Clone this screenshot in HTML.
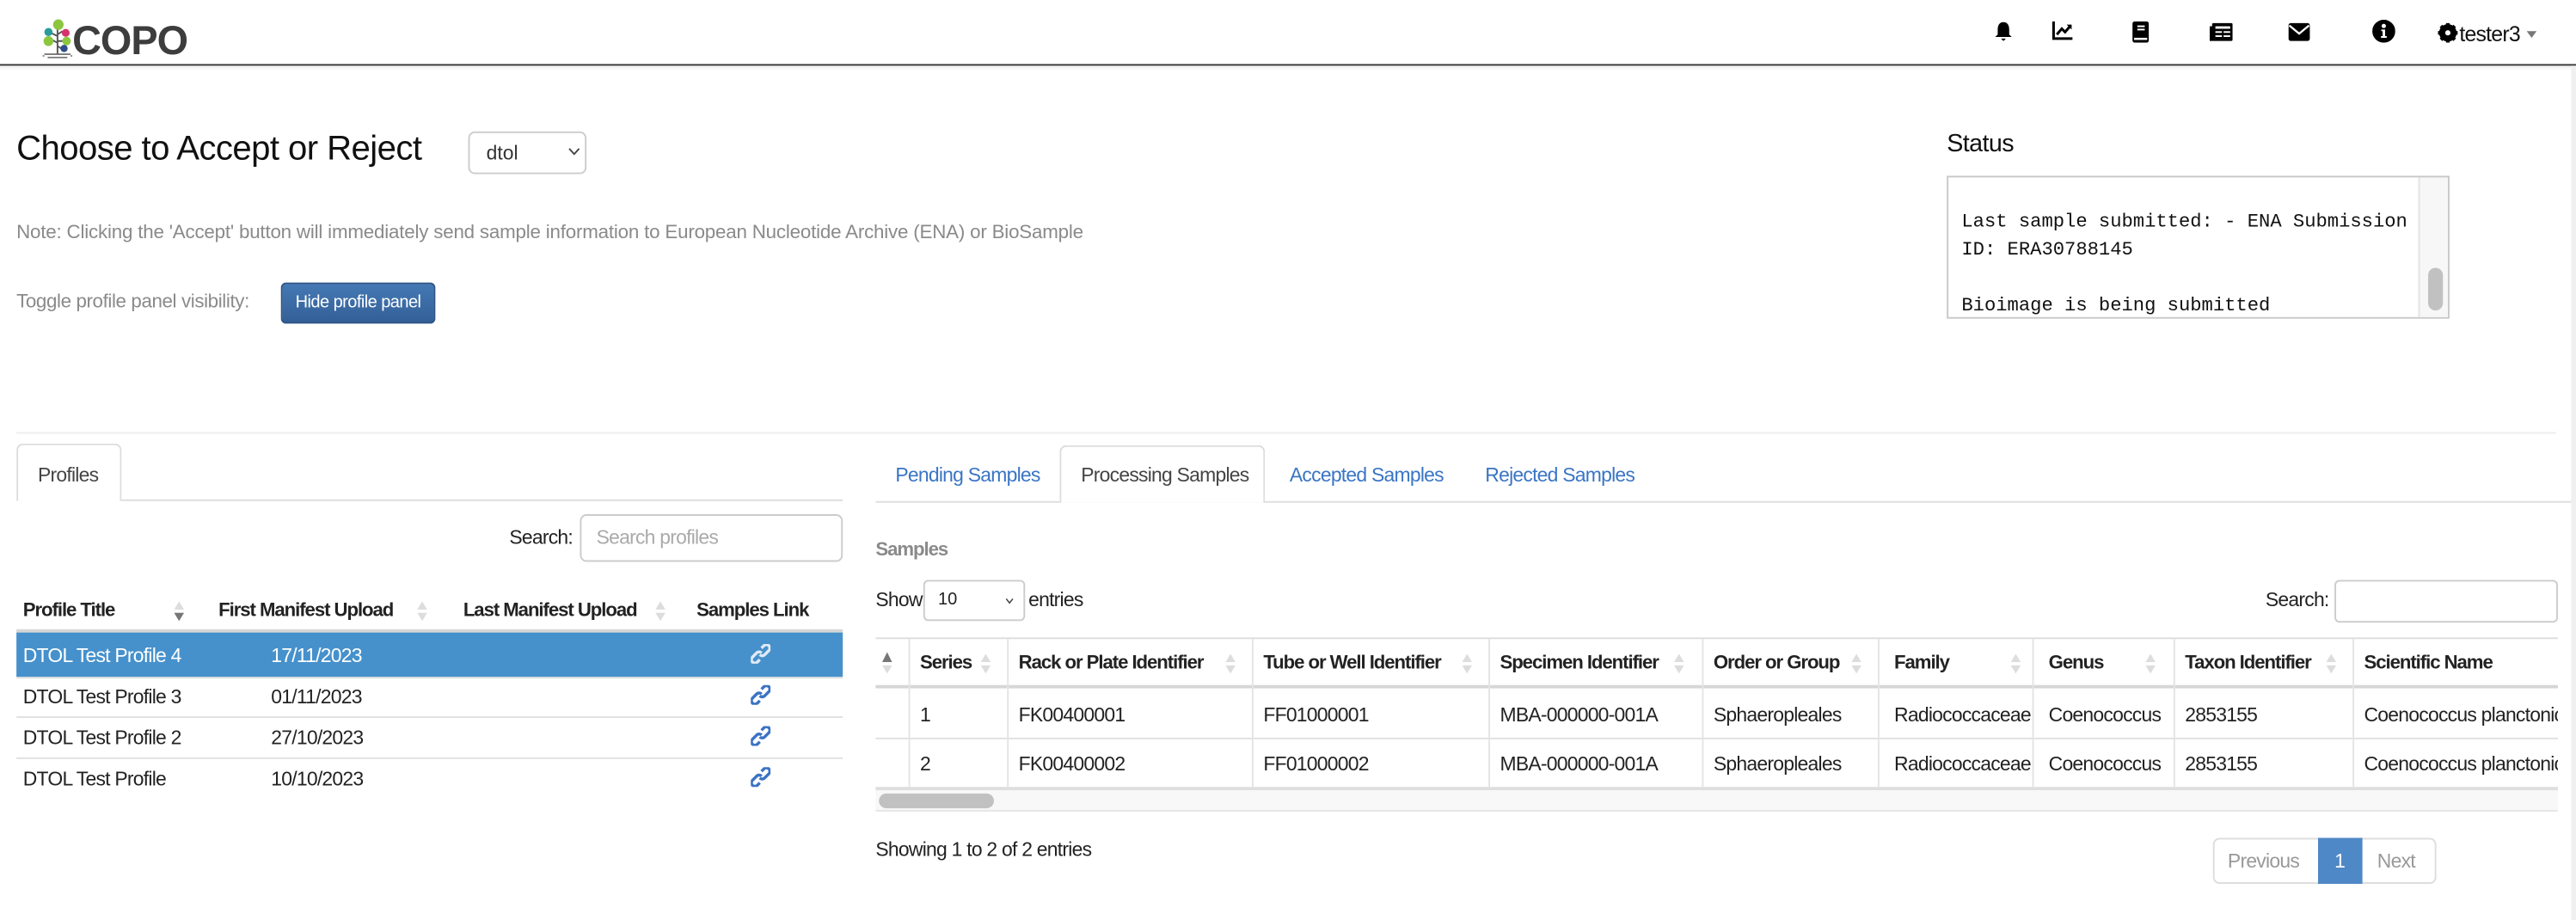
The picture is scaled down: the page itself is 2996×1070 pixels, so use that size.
<!DOCTYPE html>
<html><head><meta charset="utf-8">
<style>
html,body{margin:0;padding:0;width:2996px;height:1070px;overflow:hidden;background:#fff}
#w{position:absolute;left:0;top:0;width:1568px;height:560px;transform:scale(1.91071);transform-origin:0 0;font-family:"Liberation Sans",sans-serif;color:#222;font-size:12px}
.a{position:absolute;white-space:nowrap}
.ic{position:absolute;top:13px}
.lt{font-size:12px;letter-spacing:-0.4px}
.b{font-weight:bold;font-size:11.6px;letter-spacing:-0.55px}
.sort{position:absolute;width:6px;height:12px}
.sort:before{content:"";position:absolute;left:0;top:0;border-left:3px solid transparent;border-right:3px solid transparent;border-bottom:5px solid #ddd}
.sort:after{content:"";position:absolute;left:0;top:7px;border-left:3px solid transparent;border-right:3px solid transparent;border-top:5px solid #ddd}
.vl{position:absolute;width:1px;background:#e4e4e4}
.hl{position:absolute;height:1px;background:#e0e0e0}
</style></head><body><div id="w">
<svg class="a" style="left:25px;top:11px" width="20" height="26" viewBox="0 0 20 26">
<path d="M10 6V22M10 11L6 9M10 10L13 8M10 15L6 13M10 14L13 14M10 17L13 19" stroke="#555" stroke-width="1" fill="none"/>
<path d="M2 22H18M4 24H16M1 23h1M18 23h1" stroke="#666" stroke-width="0.8"/>
<circle cx="10.5" cy="4" r="3.2" fill="#8cc63f"/><circle cx="4.5" cy="8.5" r="2.5" fill="#2a9d9a"/><circle cx="15" cy="9" r="2.4" fill="#d6336c"/><circle cx="4.5" cy="14" r="3" fill="#8cc63f"/><circle cx="15.5" cy="14" r="2.6" fill="#8cc63f"/><circle cx="14" cy="18.5" r="2.2" fill="#2f4d8a"/>
</svg>
<div class="a" style="left:44px;top:12px;font-size:24.5px;font-weight:bold;color:#3d3d3d;letter-spacing:-0.5px">COPO</div>
<div class="a" style="left:0;top:39px;width:1568px;height:1px;background:#333"></div>
<div class="a" style="left:0;top:40px;width:1568px;height:3px;background:linear-gradient(#eee,#fff)"></div>
<svg class="ic" style="left:1214px" width="11" height="12" viewBox="0 0 11 12"><path d="M5.5 0.5C3 0.5 2 2.5 2 5V8L0.5 9.5H10.5L9 8V5C9 2.5 8 0.5 5.5 0.5Z" fill="#000"/><path d="M4 10.5H7L5.5 12Z" fill="#000"/></svg>
<svg class="ic" style="left:1249px" width="13" height="12" viewBox="0 0 13 12"><path d="M1 0V10.5H12.5" stroke="#000" stroke-width="1.6" fill="none"/><path d="M3 8L6 4.5L8 6.5L11 3" stroke="#000" stroke-width="1.6" fill="none"/><path d="M9 2H12V5Z" fill="#000"/></svg>
<svg class="ic" style="left:1298px" width="10" height="13" viewBox="0 0 10 13"><rect x="0" y="0" width="10" height="13" rx="1.5" fill="#000"/><rect x="3" y="2.5" width="4.5" height="1" fill="#fff"/><rect x="3" y="4.5" width="4.5" height="1" fill="#fff"/><rect x="1" y="10" width="8" height="1.3" fill="#fff"/></svg>
<svg class="ic" style="left:1345px;top:14px" width="14" height="11" viewBox="0 0 14 11"><rect x="1.5" y="0" width="12.5" height="11" rx="1" fill="#000"/><rect x="0" y="2" width="2" height="9" fill="#000"/><rect x="3.5" y="2" width="9" height="1.5" fill="#fff"/><rect x="3.5" y="5" width="4" height="1" fill="#fff"/><rect x="8.5" y="5" width="4" height="1" fill="#fff"/><rect x="3.5" y="7.5" width="4" height="1" fill="#fff"/><rect x="8.5" y="7.5" width="4" height="1" fill="#fff"/></svg>
<svg class="ic" style="left:1393px;top:14px" width="13" height="11" viewBox="0 0 13 11"><rect width="13" height="11" rx="1.5" fill="#000"/><path d="M0.5 1.5L6.5 6.5L12.5 1.5" stroke="#fff" stroke-width="1.2" fill="none"/></svg>
<svg class="ic" style="left:1444px;top:12px" width="14" height="14" viewBox="0 0 14 14"><circle cx="7" cy="7" r="7" fill="#000"/><circle cx="7" cy="3.8" r="1.3" fill="#fff"/><path d="M5.5 6H7.8V10H8.8V11H5.3V10H6.3V7H5.5Z" fill="#fff"/></svg>
<svg class="ic" style="left:1484px;top:14px" width="12" height="12" viewBox="0 0 12 12"><circle cx="6" cy="6" r="4" fill="none" stroke="#000" stroke-width="2.6"/><g stroke="#000" stroke-width="2.2"><path d="M6 0V12M0 6H12M1.8 1.8L10.2 10.2M10.2 1.8L1.8 10.2"/></g><circle cx="6" cy="6" r="1.6" fill="#fff"/></svg>
<div class="a" style="left:1497px;top:13px;font-size:13px;color:#111;letter-spacing:-0.4px">tester3</div>
<div class="a" style="left:1538px;top:19px;border-left:3.5px solid transparent;border-right:3.5px solid transparent;border-top:4px solid #777"></div>

<div class="a" style="left:10px;top:79px;font-size:21px;color:#111;letter-spacing:-0.3px">Choose to Accept or Reject</div>
<div class="a" style="left:285px;top:80px;width:72px;height:26px;border:1px solid #ccc;border-radius:4px;box-sizing:border-box"></div>
<div class="a" style="left:296px;top:86px;font-size:12px;color:#333">dtol</div>
<svg class="a" style="left:346px;top:90px" width="7" height="5" viewBox="0 0 7 5"><path d="M0.5 0.5L3.5 3.8L6.5 0.5" stroke="#444" stroke-width="1" fill="none"/></svg>
<div class="a" style="left:10px;top:135px;font-size:11.7px;color:#8a8a8a;letter-spacing:-0.1px">Note: Clicking the 'Accept' button will immediately send sample information to European Nucleotide Archive (ENA) or BioSample</div>
<div class="a" style="left:10px;top:177px;font-size:11.7px;color:#8a8a8a;letter-spacing:-0.2px">Toggle profile panel visibility:</div>
<div class="a" style="left:171px;top:172px;width:94px;height:25px;background:linear-gradient(#4479b4,#345f97);border:1px solid #2e5587;border-radius:3px;box-sizing:border-box;color:#fff;font-size:10.5px;letter-spacing:-0.3px;text-align:center;line-height:23px">Hide profile panel</div>

<div class="a" style="left:1185px;top:79px;font-size:15px;color:#111;letter-spacing:-0.3px">Status</div>
<div class="a" style="left:1185px;top:107px;width:306px;height:87px;border:1px solid #c8c8c8;box-sizing:border-box;overflow:hidden">
 <div class="a" style="left:0;top:19px;font-family:'Liberation Mono',monospace;font-size:11.6px;line-height:17px;color:#111;padding-left:8px">Last sample submitted: - ENA Submission<br>ID: ERA30788145<br><br>Bioimage is being submitted</div>
 <div class="a" style="left:286px;top:0;width:19px;height:86px;background:#f7f7f7;border-left:1px solid #e4e4e4"></div>
 <div class="a" style="left:292px;top:55px;width:9px;height:26px;background:#c1c1c1;border-radius:5px"></div>
</div>
<div class="a" style="left:10px;top:263px;width:1546px;height:1px;background:#eee"></div>

<div class="a" style="left:10px;top:270px;width:64px;height:35px;border:1px solid #ddd;border-bottom:none;border-radius:4px 4px 0 0;box-sizing:border-box;background:#fff"></div>
<div class="a lt" style="left:23px;top:282px;color:#444">Profiles</div>
<div class="hl" style="left:74px;top:304px;width:439px;background:#ddd"></div>
<div class="a lt" style="left:310px;top:320px">Search:</div>
<div class="a" style="left:353px;top:313px;width:160px;height:29px;border:1px solid #ccc;border-radius:4px;box-sizing:border-box"></div>
<div class="a lt" style="left:363px;top:320px;color:#aaa">Search profiles</div>
<div class="a b" style="left:14px;top:365px">Profile Title</div>
<div class="sort" style="left:106px;top:366px"></div><div class="a" style="left:106px;top:373px;border-left:3px solid transparent;border-right:3px solid transparent;border-top:5px solid #777"></div>
<div class="a b" style="left:133px;top:365px">First Manifest Upload</div><div class="sort" style="left:254px;top:366px"></div>
<div class="a b" style="left:282px;top:365px">Last Manifest Upload</div><div class="sort" style="left:399px;top:366px"></div>
<div class="a b" style="left:424px;top:365px">Samples Link</div>
<div class="a" style="left:10px;top:383px;width:503px;height:2px;background:#d6d6d6"></div>
<div class="a" style="left:10px;top:385px;width:503px;height:27px;background:#4691cc"></div>
<div class="hl" style="left:10px;top:412px;width:503px;background:#ddd"></div>
<div class="hl" style="left:10px;top:436px;width:503px"></div>
<div class="hl" style="left:10px;top:461px;width:503px"></div>
<div class="a lt" style="left:14px;top:392px;color:#fff">DTOL Test Profile 4</div><div class="a lt" style="left:165px;top:392px;color:#fff">17/11/2023</div>
<div class="a lt" style="left:14px;top:417px">DTOL Test Profile 3</div><div class="a lt" style="left:165px;top:417px">01/11/2023</div>
<div class="a lt" style="left:14px;top:442px">DTOL Test Profile 2</div><div class="a lt" style="left:165px;top:442px">27/10/2023</div>
<div class="a lt" style="left:14px;top:467px">DTOL Test Profile</div><div class="a lt" style="left:165px;top:467px">10/10/2023</div>
<svg class="a" style="left:457px;top:392px" width="12" height="12" viewBox="0 0 12 12"><g fill="none" stroke="#dfe9f5" stroke-width="1.8"><path d="M6.5 2.5L8 1a2 2 0 0 1 3 3L8.5 6.5a2 2 0 0 1-3 0"/><path d="M5.5 9.5L4 11a2 2 0 0 1-3-3L3.5 5.5a2 2 0 0 1 3 0"/></g></svg>
<svg class="a" style="left:457px;top:417px" width="12" height="12" viewBox="0 0 12 12"><g fill="none" stroke="#3b73c4" stroke-width="1.8"><path d="M6.5 2.5L8 1a2 2 0 0 1 3 3L8.5 6.5a2 2 0 0 1-3 0"/><path d="M5.5 9.5L4 11a2 2 0 0 1-3-3L3.5 5.5a2 2 0 0 1 3 0"/></g></svg>
<svg class="a" style="left:457px;top:442px" width="12" height="12" viewBox="0 0 12 12"><g fill="none" stroke="#3b73c4" stroke-width="1.8"><path d="M6.5 2.5L8 1a2 2 0 0 1 3 3L8.5 6.5a2 2 0 0 1-3 0"/><path d="M5.5 9.5L4 11a2 2 0 0 1-3-3L3.5 5.5a2 2 0 0 1 3 0"/></g></svg>
<svg class="a" style="left:457px;top:467px" width="12" height="12" viewBox="0 0 12 12"><g fill="none" stroke="#3b73c4" stroke-width="1.8"><path d="M6.5 2.5L8 1a2 2 0 0 1 3 3L8.5 6.5a2 2 0 0 1-3 0"/><path d="M5.5 9.5L4 11a2 2 0 0 1-3-3L3.5 5.5a2 2 0 0 1 3 0"/></g></svg>

<div class="hl" style="left:533px;top:305px;width:1035px;background:#ddd"></div>
<div class="a" style="left:645px;top:271px;width:125px;height:35px;border:1px solid #ddd;border-bottom:none;border-radius:4px 4px 0 0;box-sizing:border-box;background:#fff"></div>
<div class="a lt" style="left:545px;top:282px;color:#3a75c4">Pending Samples</div>
<div class="a lt" style="left:658px;top:282px;color:#444">Processing Samples</div>
<div class="a lt" style="left:785px;top:282px;color:#3a75c4">Accepted Samples</div>
<div class="a lt" style="left:904px;top:282px;color:#3a75c4">Rejected Samples</div>
<div class="a b" style="left:533px;top:328px;color:#8a8a8a">Samples</div>
<div class="a lt" style="left:533px;top:358px">Show</div>
<div class="a" style="left:562px;top:353px;width:62px;height:25px;border:1px solid #ccc;border-radius:3px;box-sizing:border-box"></div>
<div class="a" style="left:571px;top:359px;font-size:10.5px">10</div>
<svg class="a" style="left:612px;top:364px" width="5" height="4" viewBox="0 0 5 4"><path d="M0.5 0.5L2.5 3L4.5 0.5" stroke="#444" stroke-width="0.8" fill="none"/></svg>
<div class="a lt" style="left:626px;top:358px">entries</div>
<div class="a lt" style="left:1379px;top:358px">Search:</div>
<div class="a" style="left:1421px;top:353px;width:136px;height:26px;border:1px solid #ccc;border-radius:3px;box-sizing:border-box"></div>

<div class="hl" style="left:533px;top:388px;width:1024px;background:#ddd"></div>
<div class="a" style="left:533px;top:417px;width:1024px;height:2px;background:#d6d6d6"></div>
<div class="hl" style="left:533px;top:449px;width:1024px"></div>
<div class="a" style="left:533px;top:479px;width:1024px;height:2px;background:#dedede"></div>
<div class="a" style="left:533px;top:481px;width:1024px;height:12px;background:#f8f8f8"></div>
<div class="a" style="left:535px;top:483px;width:70px;height:9px;background:#c1c1c1;border-radius:5px"></div>
<div class="hl" style="left:533px;top:493px;width:1024px;background:#e6e6e6"></div>
<div class="vl" style="left:553px;top:389px;height:90px"></div>
<div class="vl" style="left:613px;top:389px;height:90px"></div>
<div class="vl" style="left:762px;top:389px;height:90px"></div>
<div class="vl" style="left:906px;top:389px;height:90px"></div>
<div class="vl" style="left:1036px;top:389px;height:90px"></div>
<div class="vl" style="left:1143px;top:389px;height:90px"></div>
<div class="vl" style="left:1237px;top:389px;height:90px"></div>
<div class="vl" style="left:1323px;top:389px;height:90px"></div>
<div class="vl" style="left:1432px;top:389px;height:90px"></div>
<div class="a" style="left:537px;top:397px;border-left:3px solid transparent;border-right:3px solid transparent;border-bottom:6px solid #777"></div><div class="a" style="left:537px;top:405px;border-left:3px solid transparent;border-right:3px solid transparent;border-top:5px solid #ddd"></div>
<div class="a b" style="left:560px;top:397px">Series</div><div class="sort" style="left:597px;top:398px"></div>
<div class="a b" style="left:620px;top:397px">Rack or Plate Identifier</div><div class="sort" style="left:746px;top:398px"></div>
<div class="a b" style="left:769px;top:397px">Tube or Well Identifier</div><div class="sort" style="left:890px;top:398px"></div>
<div class="a b" style="left:913px;top:397px">Specimen Identifier</div><div class="sort" style="left:1019px;top:398px"></div>
<div class="a b" style="left:1043px;top:397px">Order or Group</div><div class="sort" style="left:1127px;top:398px"></div>
<div class="a b" style="left:1153px;top:397px">Family</div><div class="sort" style="left:1224px;top:398px"></div>
<div class="a b" style="left:1247px;top:397px">Genus</div><div class="sort" style="left:1306px;top:398px"></div>
<div class="a b" style="left:1330px;top:397px">Taxon Identifier</div><div class="sort" style="left:1416px;top:398px"></div>
<div class="a b" style="left:1439px;top:397px">Scientific Name</div>
<div class="a lt" style="left:560px;top:428px">1</div><div class="a lt" style="left:620px;top:428px">FK00400001</div><div class="a lt" style="left:769px;top:428px">FF01000001</div><div class="a lt" style="left:913px;top:428px">MBA-000000-001A</div><div class="a lt" style="left:1043px;top:428px">Sphaeropleales</div><div class="a lt" style="left:1153px;top:428px">Radiococcaceae</div><div class="a lt" style="left:1247px;top:428px">Coenococcus</div><div class="a lt" style="left:1330px;top:428px">2853155</div>
<div class="a lt" style="left:560px;top:458px">2</div><div class="a lt" style="left:620px;top:458px">FK00400002</div><div class="a lt" style="left:769px;top:458px">FF01000002</div><div class="a lt" style="left:913px;top:458px">MBA-000000-001A</div><div class="a lt" style="left:1043px;top:458px">Sphaeropleales</div><div class="a lt" style="left:1153px;top:458px">Radiococcaceae</div><div class="a lt" style="left:1247px;top:458px">Coenococcus</div><div class="a lt" style="left:1330px;top:458px">2853155</div>
<div class="a" style="left:1433px;top:420px;width:124px;height:58px;overflow:hidden"><div class="a lt" style="left:6px;top:8px">Coenococcus planctonicus</div><div class="a lt" style="left:6px;top:38px">Coenococcus planctonicus</div></div>

<div class="a lt" style="left:533px;top:510px">Showing 1 to 2 of 2 entries</div>
<div class="a" style="left:1347px;top:510px;width:136px;height:28px;border:1px solid #ddd;border-radius:4px;box-sizing:border-box"></div>
<div class="a" style="left:1411px;top:510px;width:27px;height:28px;background:#4f88c6"></div>
<div class="a lt" style="left:1356px;top:517px;color:#999">Previous</div>
<div class="a lt" style="left:1421px;top:517px;color:#fff">1</div>
<div class="a lt" style="left:1447px;top:517px;color:#999">Next</div>
<div class="a" style="left:1565px;top:40px;width:3px;height:520px;background:#f0f0f0"></div>
</div></body></html>
